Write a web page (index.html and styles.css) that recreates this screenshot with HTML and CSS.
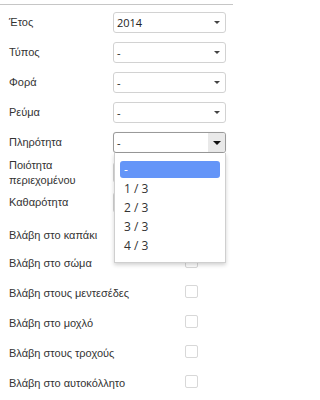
FILE: index.html
```html
<!DOCTYPE html>
<html>
<head>
<meta charset="utf-8">
<link rel="stylesheet" href="styles.css">
</head>
<body>
<div class="page">
  <div class="rule"></div>
  <div class="form">
    <div class="row"><div class="label">Έτος</div><div class="select"><span class="val">2014</span><span class="arrow"></span></div></div>
    <div class="row"><div class="label">Τύπος</div><div class="select"><span class="val">-</span><span class="arrow"></span></div></div>
    <div class="row"><div class="label">Φορά</div><div class="select"><span class="val">-</span><span class="arrow"></span></div></div>
    <div class="row"><div class="label">Ρεύμα</div><div class="select"><span class="val">-</span><span class="arrow"></span></div></div>
    <div class="row open-row">
      <div class="label">Πληρότητα</div>
      <div class="select focused"><span class="val">-</span><span class="arrow-box"><span class="arrow"></span></span></div>
      <div class="dropdown">
        <div class="opt selected">-</div>
        <div class="opt">1 / 3</div>
        <div class="opt">2 / 3</div>
        <div class="opt">3 / 3</div>
        <div class="opt">4 / 3</div>
      </div>
    </div>
    <div class="row"><div class="label">Ποιότητα περιεχομένου</div><div class="select"><span class="val">-</span><span class="arrow"></span></div></div>
    <div class="row"><div class="label">Καθαρότητα</div><div class="select"><span class="val">-</span><span class="arrow"></span></div></div>
  </div>
  <div class="checks">
    <div class="crow first"><div class="label">Βλάβη στο καπάκι</div><span class="box"></span></div>
    <div class="crow"><div class="label">Βλάβη στο σώμα</div><span class="box"></span></div>
    <div class="crow"><div class="label">Βλάβη στους μεντεσέδες</div><span class="box"></span></div>
    <div class="crow"><div class="label">Βλάβη στο μοχλό</div><span class="box"></span></div>
    <div class="crow"><div class="label">Βλάβη στους τροχούς</div><span class="box"></span></div>
    <div class="crow"><div class="label">Βλάβη στο αυτοκόλλητο</div><span class="box"></span></div>
  </div>
</div>
</body>
</html>
```

FILE: styles.css
```css
html, body {
  margin: 0;
  padding: 0;
  background: #ffffff;
}
.page {
  width: 235px;
  height: 400px;
  overflow: hidden;
  padding-top: 4px;
  box-sizing: border-box;
  font-family: "Liberation Sans", Arial, sans-serif;
  font-size: 11px;
  color: #333333;
}
.rule {
  width: 233px;
  height: 0;
  border-top: 1px solid #c6c6c6;
}
.form {
  padding-top: 7px;
}
.row {
  position: relative;
  display: flex;
  align-items: center;
  height: 21px;
  margin-bottom: 9px;
}
.label {
  box-sizing: border-box;
  width: 113px;
  padding-left: 9px;
  padding-right: 8px;
  line-height: 15px;
  flex: none;
}
.select {
  position: relative;
  box-sizing: border-box;
  width: 113px;
  height: 21px;
  flex: none;
  border: 1px solid #d2d2d2;
  border-radius: 3px;
  display: flex;
  align-items: center;
  font-family: "Open Sans", "Noto Sans", sans-serif;
  font-size: 11px;
  color: #222;
  padding-left: 3px;
  background: #fff;
}
.val {
  flex: 1;
}
.arrow {
  width: 0;
  height: 0;
  border-left: 3px solid transparent;
  border-right: 3px solid transparent;
  border-top: 3px solid #444;
  margin-right: 5px;
}
.select.focused {
  border-color: #9a9a9a;
  box-shadow: 0 0 1px rgba(0,0,0,0.15);
}
.arrow-box {
  align-self: stretch;
  width: 17px;
  background: #e9e9e9;
  display: flex;
  align-items: center;
  justify-content: center;
  border-radius: 0 2px 2px 0;
}
.arrow-box .arrow {
  margin-right: 0;
  border-left-width: 4px;
  border-right-width: 4px;
  border-top-width: 4px;
  border-top-color: #111;
}
.dropdown {
  position: absolute;
  left: 114px;
  top: 21px;
  width: 112px;
  box-sizing: border-box;
  padding: 8px 5px 6px 5px;
  background: #fff;
  border: 1px solid #cfcfcf;
  border-top: none;
  box-shadow: 0 2px 4px rgba(0,0,0,0.18);
  z-index: 5;
  font-family: "Open Sans", "Noto Sans", sans-serif;
  font-size: 12px;
  color: #333;
}
.opt {
  height: 17px;
  line-height: 17px;
  margin-bottom: 2px;
  padding-left: 4px;
  white-space: pre;
}
.opt.selected {
  background: #6495f8;
  color: #fff;
  border-radius: 3px;
}
.checks {
  margin-top: 2px;
}
.crow {
  display: flex;
  align-items: center;
  height: 30px;
}
.crow.first {
  height: 26px;
}
.crow .label {
  width: 176px;
}
.box {
  width: 11px;
  height: 11px;
  border: 1px solid #d8d8d8;
  border-radius: 2px;
  margin-left: 9px;
  margin-top: -3px;
  background: #fff;
}
```
